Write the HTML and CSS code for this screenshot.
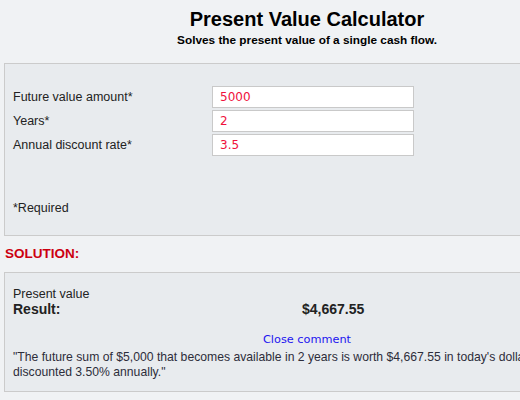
FILE: index.html
```html
<!DOCTYPE html>
<html>
<head>
<meta charset="utf-8">
<link rel="stylesheet" href="styles.css">
</head>
<body>
<div class="page">
  <h1 class="title">Present Value Calculator</h1>
  <p class="subtitle">Solves the present value of a single cash flow.</p>

  <div class="panel inputs">
    <div class="row">
      <label class="label">Future value amount*</label>
      <input class="field" type="text" value="5000">
    </div>
    <div class="row">
      <label class="label">Years*</label>
      <input class="field" type="text" value="2">
    </div>
    <div class="row">
      <label class="label">Annual discount rate*</label>
      <input class="field" type="text" value="3.5">
    </div>
    <p class="required">*Required</p>
  </div>

  <h2 class="solution">SOLUTION:</h2>

  <div class="panel result-panel">
    <div class="pv-label">Present value</div>
    <div class="result-row">
      <span class="result-label">Result:</span>
      <span class="result-value">$4,667.55</span>
    </div>
    <div class="close"><a class="close-link" href="#">Close comment</a></div>
    <p class="comment">"The future sum of $5,000 that becomes available in 2 years is worth $4,667.55 in today's dollars, if<br>discounted 3.50% annually."</p>
  </div>
</div>
</body>
</html>
```

FILE: styles.css
```css
html, body {
  margin: 0;
  padding: 0;
  background: #f0f2f4;
  overflow: hidden;
}

.page {
  width: 606px;
  margin-left: 4px;
  font-family: "Liberation Sans", Arial, sans-serif;
  color: #222;
}

.title {
  margin: 7px 0 0;
  font-size: 20px;
  line-height: 24px;
  font-weight: bold;
  text-align: center;
  color: #000;
}

.subtitle {
  margin: 2px 0 0;
  font-size: 11.8px;
  line-height: 14px;
  font-weight: bold;
  text-align: center;
  color: #000;
}

.panel {
  background: #e8ebee;
  border: 1px solid #cbcbcb;
  box-sizing: border-box;
}

.inputs {
  margin-top: 16px;
  height: 173px;
  padding: 22px 8px 0;
  display: flex;
  flex-direction: column;
  gap: 2px;
}

.row {
  display: flex;
  align-items: center;
  height: 22px;
}

.label {
  width: 199px;
  font-size: 12.5px;
  color: #222;
}

.field {
  width: 202px;
  height: 22px;
  box-sizing: border-box;
  margin: 0;
  border: 1px solid #c9c9c9;
  background: #fff;
  padding: 0 0 0 7px;
  font-family: "DejaVu Sans", Verdana, sans-serif;
  font-size: 12px;
  color: #f0103c;
  outline: none;
}

.required {
  margin: 43px 0 0;
  font-size: 12.5px;
  line-height: 14px;
  color: #222;
}

.solution {
  margin: 10px 0 0 1px;
  font-size: 13.5px;
  line-height: 16px;
  font-weight: bold;
  color: #cc0010;
}

.result-panel {
  margin-top: 10px;
  height: 120px;
  padding: 14px 8px 0;
}

.pv-label {
  font-size: 12.5px;
  line-height: 14px;
}

.result-row {
  display: grid;
  grid-template-columns: 289px auto;
  font-size: 14px;
  line-height: 16px;
  font-weight: bold;
}

.close {
  margin-top: 13px;
  text-align: center;
  line-height: 15px;
}

.close-link {
  font-family: "DejaVu Sans", Verdana, sans-serif;
  font-size: 11.3px;
  color: #1c14f0;
  text-decoration: none;
}

.comment {
  margin: 3px 0 0;
  font-size: 12.2px;
  line-height: 15px;
  color: #2d2d3a;
}
```
